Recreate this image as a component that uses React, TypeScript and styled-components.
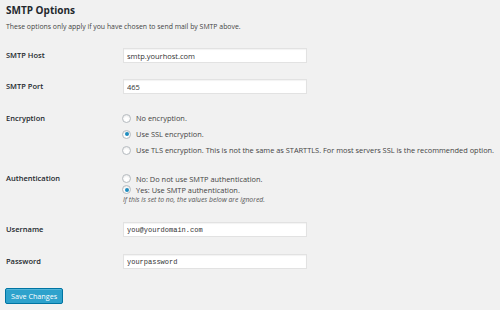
import React from "react";
import styled, { createGlobalStyle } from "styled-components";

const Global = createGlobalStyle`
  html, body { margin: 0; padding: 0; background: #f1f1f1; }
  body { font-family: "Open Sans", "Liberation Sans", sans-serif; color: #444; }
  * { box-sizing: border-box; }
`;

const Page = styled.div`
  padding: 0 6px;
  width: 500px;
  height: 310px;
  overflow: hidden;
`;

const Title = styled.h3`
  margin: 3px 0 0;
  font-size: 10px;
  line-height: 14px;
  font-weight: 700;
  color: #23282d;
`;

const Desc = styled.p`
  margin: 5px 0 0;
  font-size: 6.9px;
  line-height: 10px;
  color: #444;
`;

const Table = styled.div`
  display: flex;
  flex-direction: column;
`;

const Row = styled.div<{ $top: number; $bottom: number }>`
  display: grid;
  grid-template-columns: 117px 1fr;
  padding: ${(p) => p.$top}px 0 ${(p) => p.$bottom}px;
`;

const Label = styled.div<{ $lh: number }>`
  font-size: 7.5px;
  font-weight: 600;
  color: #23282d;
  line-height: ${(p) => p.$lh}px;
`;

const Input = styled.input<{ $mono?: boolean }>`
  width: 184px;
  height: 15px;
  margin: 0;
  padding: 0 3px;
  border: 1px solid #e2e2e2;
  background: #fff;
  box-shadow: inset 0 1px 1px rgba(0, 0, 0, 0.05);
  font-family: ${(p) =>
    p.$mono ? '"Liberation Mono", "DejaVu Sans Mono", monospace' : '"Open Sans", "Liberation Sans", sans-serif'};
  font-size: ${(p) => (p.$mono ? "7px" : "7.5px")};
  color: #333;
  outline: none;
  display: block;
`;

const Options = styled.div`
  display: flex;
  flex-direction: column;
`;

const Option = styled.label<{ $lh: number }>`
  display: flex;
  align-items: center;
  gap: 5px;
  height: ${(p) => p.$lh}px;
  font-size: 7.4px;
  color: #444;
  margin-left: -1px;
  white-space: nowrap;
`;

const Radio = styled.span<{ $checked?: boolean }>`
  width: 9px;
  height: 9px;
  border-radius: 50%;
  border: 1px solid #b4b9be;
  background: #fff;
  box-shadow: inset 0 1px 2px rgba(0, 0, 0, 0.1);
  display: flex;
  align-items: center;
  justify-content: center;
  flex: none;
  &::after {
    content: "";
    display: ${(p) => (p.$checked ? "block" : "none")};
    width: 4px;
    height: 4px;
    border-radius: 50%;
    background: #1e8cbe;
  }
`;

const Note = styled.div`
  font-size: 6.8px;
  line-height: 9px;
  font-style: italic;
  color: #555;
`;

const Button = styled.button`
  margin-top: 11px;
  margin-left: -1px;
  height: 16px;
  padding: 0 5px;
  border: 1px solid #0074a2;
  border-radius: 2px;
  background: #2ea2cc;
  box-shadow: inset 0 1px 0 rgba(120, 200, 230, 0.5);
  color: #fff;
  font-family: "Open Sans", "Liberation Sans", sans-serif;
  font-size: 7.2px;
  line-height: 14px;
  cursor: pointer;
`;

export default function App() {
  return (
    <Page>
      <Global />
      <Title>SMTP Options</Title>
      <Desc>These options only apply if you have chosen to send mail by SMTP above.</Desc>
      <Table>
        <Row $top={16} $bottom={8}>
          <Label $lh={15}>SMTP Host</Label>
          <Input defaultValue="smtp.yourhost.com" />
        </Row>
        <Row $top={8} $bottom={8}>
          <Label $lh={15}>SMTP Port</Label>
          <Input defaultValue="465" />
        </Row>
        <Row $top={8} $bottom={8}>
          <Label $lh={16}>Encryption</Label>
          <Options>
            <Option $lh={16}>
              <Radio />
              No encryption.
            </Option>
            <Option $lh={16}>
              <Radio $checked />
              Use SSL encryption.
            </Option>
            <Option $lh={16}>
              <Radio />
              Use TLS encryption. This is not the same as STARTTLS. For most servers SSL is the recommended option.
            </Option>
          </Options>
        </Row>
        <Row $top={7} $bottom={8}>
          <Label $lh={11}>Authentication</Label>
          <Options>
            <Option $lh={11}>
              <Radio />
              No: Do not use SMTP authentication.
            </Option>
            <Option $lh={11}>
              <Radio $checked />
              Yes: Use SMTP authentication.
            </Option>
            <Note>If this is set to no, the values below are ignored.</Note>
          </Options>
        </Row>
        <Row $top={10} $bottom={8}>
          <Label $lh={15}>Username</Label>
          <Input $mono defaultValue="you@yourdomain.com" />
        </Row>
        <Row $top={9} $bottom={8}>
          <Label $lh={15}>Password</Label>
          <Input $mono defaultValue="yourpassword" />
        </Row>
      </Table>
      <div>
        <Button>Save Changes</Button>
      </div>
    </Page>
  );
}
